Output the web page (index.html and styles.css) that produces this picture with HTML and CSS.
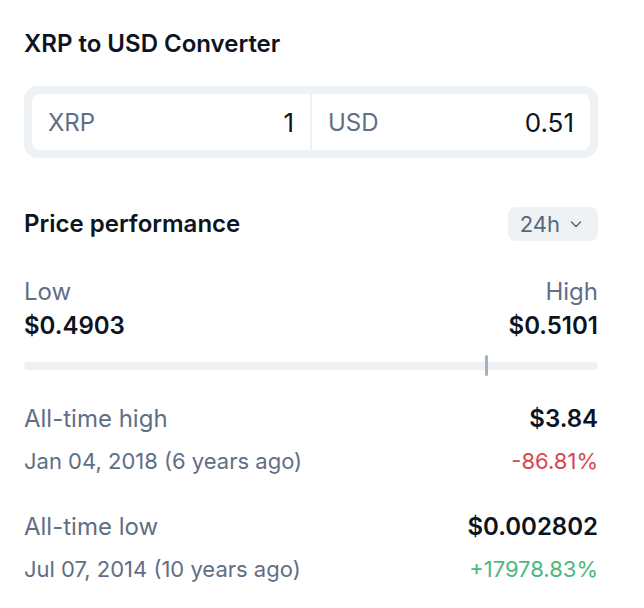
FILE: index.html
```html
<!DOCTYPE html>
<html lang="en">
<head>
    <meta charset="UTF-8">
    <meta name="viewport" content="width=device-width, initial-scale=1.0">
    <title>XRP to USD</title>
    <link rel="stylesheet" href="styles.css">
</head>
<body>
    <div class="panel">
        <h2 class="title">XRP to USD Converter</h2>

        <div class="converter">
            <div class="conv-field">
                <span class="conv-label">XRP</span>
                <span class="conv-value">1</span>
            </div>
            <div class="conv-field">
                <span class="conv-label">USD</span>
                <span class="conv-value">0.51</span>
            </div>
        </div>

        <div class="perf-head">
            <h2 class="title">Price performance</h2>
            <button class="range-btn">24h
                <svg width="16" height="16" viewBox="0 0 16 16" fill="none" stroke="currentColor" stroke-width="1.5" stroke-linecap="round" stroke-linejoin="round"><path d="M3.5 6l4.5 4.5 4.5-4.5"/></svg>
            </button>
        </div>

        <div class="range-labels">
            <div>
                <div class="muted">Low</div>
                <div class="strong">$0.4903</div>
            </div>
            <div class="right">
                <div class="muted">High</div>
                <div class="strong">$0.5101</div>
            </div>
        </div>

        <div class="range-bar">
            <span class="range-marker" style="left: 80.3%"></span>
        </div>

        <div class="stat">
            <div class="stat-row">
                <span class="muted">All-time high</span>
                <span class="strong">$3.84</span>
            </div>
            <div class="stat-row small">
                <span class="muted">Jan 04, 2018 (6 years ago)</span>
                <span class="down">-86.81%</span>
            </div>
        </div>

        <div class="stat">
            <div class="stat-row">
                <span class="muted">All-time low</span>
                <span class="strong">$0.002802</span>
            </div>
            <div class="stat-row small">
                <span class="muted">Jul 07, 2014 (10 years ago)</span>
                <span class="up">+17978.83%</span>
            </div>
        </div>
    </div>
</body>
</html>
```

FILE: styles.css
```css
body {
    margin: 0;
    background-color: #ffffff;
    font-family: 'Inter', 'Noto Sans', sans-serif;
    color: #0d1421;
}
.panel {
    width: 574px;
    padding: 30px 46px 0 24px;
}
.title {
    margin: 0;
    font-size: 24px;
    font-weight: 600;
    line-height: 28px;
}
.converter {
    display: flex;
    margin-top: 28px;
    padding: 8px;
    background-color: #eff2f5;
    border-radius: 14px;
}
.conv-field {
    flex: 1;
    display: flex;
    justify-content: space-between;
    align-items: center;
    height: 56px;
    padding: 0 16px;
    background-color: #ffffff;
}
.conv-field:first-child {
    border-radius: 8px 0 0 8px;
    border-right: 2px solid #eff2f5;
}
.conv-field:last-child {
    border-radius: 0 8px 8px 0;
}
.conv-label {
    font-size: 24px;
    color: #616e85;
}
.conv-value {
    font-size: 26px;
    color: #0d1421;
}
.perf-head {
    display: flex;
    justify-content: space-between;
    align-items: center;
    margin-top: 49px;
}
.range-btn {
    display: flex;
    align-items: center;
    gap: 8px;
    height: 34px;
    padding: 0 14px 0 12px;
    border: none;
    border-radius: 8px;
    background-color: #eff2f5;
    color: #58667e;
    font-family: inherit;
    font-size: 22px;
}
.range-labels {
    display: flex;
    justify-content: space-between;
    margin-top: 34px;
}
.right {
    text-align: right;
}
.muted {
    color: #616e85;
    font-size: 24px;
    line-height: 34px;
}
.strong {
    font-size: 24px;
    font-weight: 600;
    line-height: 34px;
}
.range-bar {
    position: relative;
    height: 8px;
    margin-top: 19px;
    border-radius: 4px;
    background-color: #eff2f5;
}
.range-marker {
    position: absolute;
    top: -7px;
    width: 3px;
    height: 21px;
    border-radius: 2px;
    background-color: #a6b0c3;
}
.stat {
    margin-top: 32px;
}
.stat + .stat {
    margin-top: 34px;
}
.stat-row {
    display: flex;
    justify-content: space-between;
    align-items: center;
}
.stat-row.small {
    margin-top: 10px;
}
.stat-row.small span {
    font-size: 22px;
    line-height: 30px;
}
.down {
    color: #d9474e;
}
.up {
    color: #4cb97a;
}
```
